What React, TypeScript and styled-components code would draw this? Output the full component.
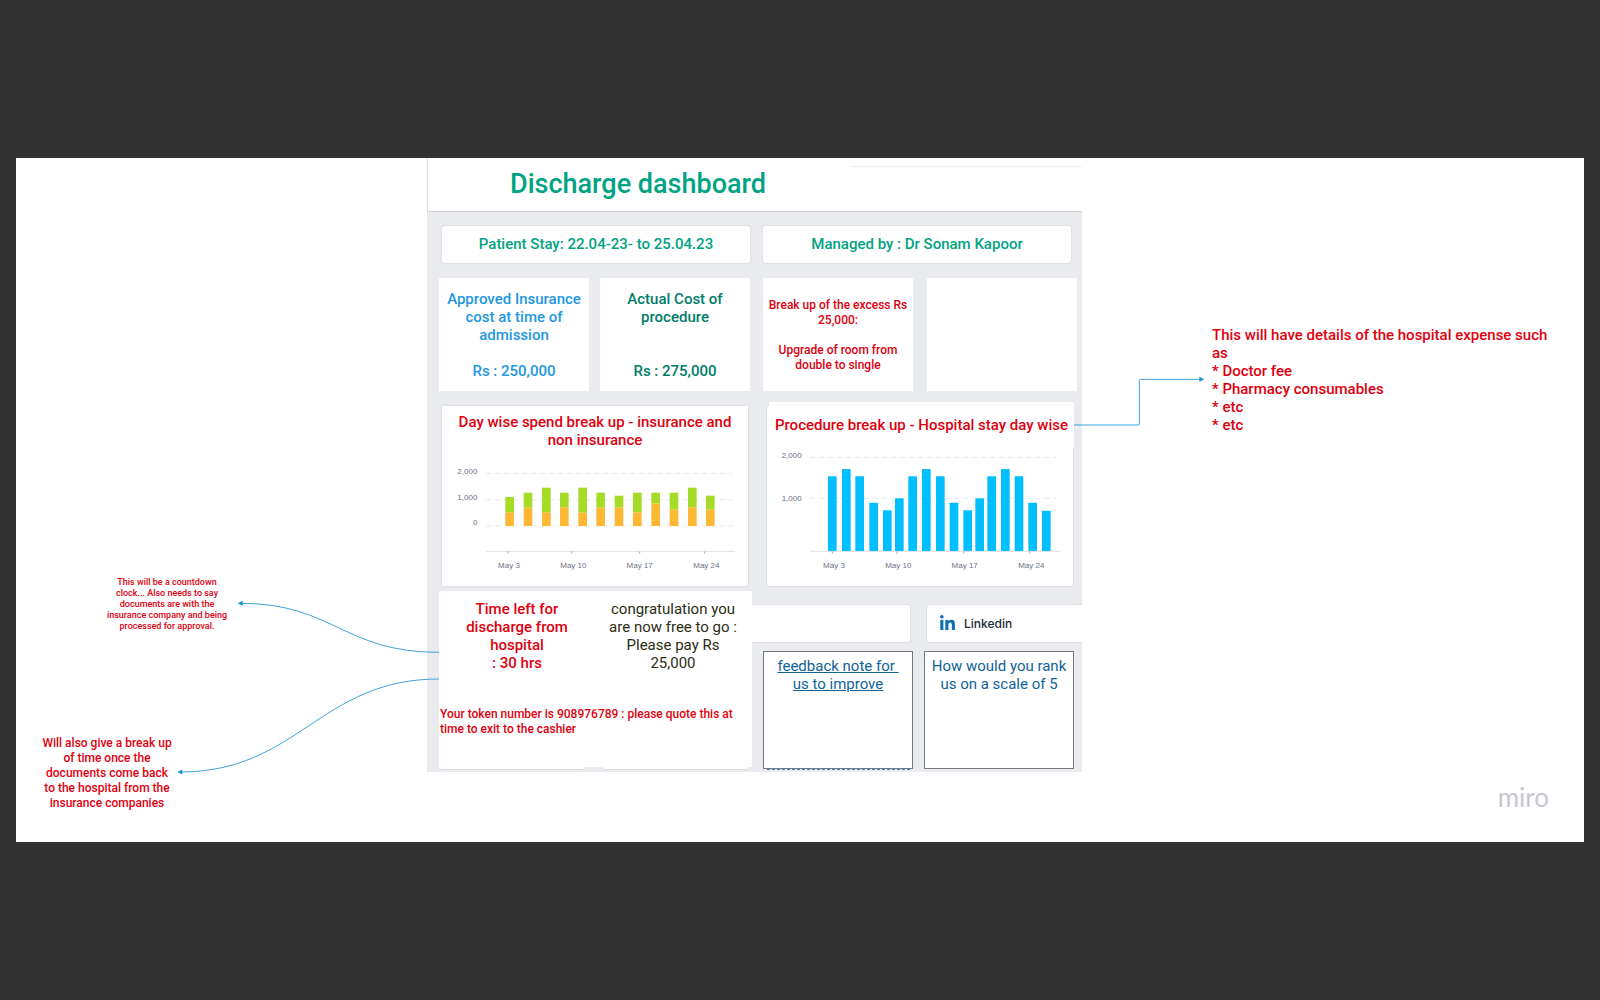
import React from "react";
import styled, { createGlobalStyle } from "styled-components";
import { FaLinkedinIn } from "react-icons/fa";

const color = {
  backdrop: "#323232",
  panel: "#eaebef",
  line: "#dcdde1",
  teal: "#00a383",
  blue: "#1e98e0",
  green: "#007d68",
  red: "#e0000f",
  olive: "#2b2d12",
  navy: "#0f6396",
  connector: "#3fa3dc",
};

const GlobalStyle = createGlobalStyle`
  *, *::before, *::after { box-sizing: border-box; }
  body {
    margin: 0;
    background: ${color.backdrop};
    font-family: Roboto, "Liberation Sans", sans-serif;
  }
  h1, h2, p { margin: 0; font-weight: 400; }
`;

const Page = styled.main`
  min-height: 100vh;
  padding: 16px;
  display: flex;
  flex-direction: column;
  justify-content: center;
`;

const Board = styled.div`
  position: relative;
  min-height: 684px;
  background: #fff;
  display: grid;
  grid-template-columns: 411fr 655fr 502fr;
  align-items: start;
`;

const Text = styled.p<{ $size?: "tiny" | "small" | "body"; $color?: string; $align?: string; $regular?: boolean }>`
  font-size: ${(p) => (p.$size === "tiny" ? 9 : p.$size === "small" ? 12 : 15)}px;
  line-height: ${(p) => (p.$size === "tiny" ? 11 : p.$size === "small" ? 15 : 18)}px;
  font-weight: ${(p) => (p.$regular ? 400 : 500)};
  color: ${(p) => p.$color ?? color.red};
  text-align: ${(p) => p.$align ?? "center"};
  white-space: pre-line;
`;

const LeftNotes = styled.aside`
  position: relative;
  padding: 419px 198px 0 20px;
  display: flex;
  flex-direction: column;
  align-items: flex-end;
  gap: 104px;
`;

const ClockNote = styled(Text)`
  width: 124px;
`;

const BreakupNote = styled(Text)`
  width: 132px;
  margin-right: 56px;
`;

const RightNotes = styled.aside`
  position: relative;
  padding: 168px 32px 0 130px;
`;

const LeftConnectors = styled.svg`
  position: absolute;
  z-index: 1;
  top: 442px;
  right: -12px;
  width: 261px;
  height: 180px;
`;

const RightConnector = styled.svg`
  position: absolute;
  z-index: 1;
  top: 214px;
  left: -8px;
  width: 132px;
  height: 60px;
`;

const Brand = styled.span`
  position: absolute;
  right: 35px;
  bottom: 31px;
  font: 400 26px/28px Lato, sans-serif;
  color: #c6c6cf;
`;

const Dashboard = styled.section`
  background: ${color.panel};
  padding-bottom: 3px;
`;

const Header = styled.header`
  position: relative;
  height: 54px;
  padding: 0 82px 2px;
  display: flex;
  align-items: center;
  background: #fff;
  border-left: 1px solid ${color.line};
  border-bottom: 1px solid #d3d3d8;
  &::after {
    content: "";
    position: absolute;
    top: 8px;
    right: 0;
    width: 232px;
    height: 1px;
    background: #f0f0f2;
  }
`;

const Title = styled.h1`
  font-size: 27px;
  line-height: 34px;
  font-weight: 500;
  color: ${color.teal};
`;

const InfoRow = styled.div`
  padding: 14px 11px 0 15px;
  display: grid;
  grid-template-columns: 1fr 1fr;
  gap: 13px;
`;

const InfoBox = styled.div`
  height: 37px;
  padding-bottom: 1px;
  display: flex;
  align-items: center;
  justify-content: center;
  background: #fff;
  border-radius: 3px;
  box-shadow: 0 0 1px 1px #e0e1e5;
`;

const TileRow = styled.div`
  padding: 15px 5px 0 12px;
  display: grid;
  grid-template-columns: 311fr 314fr;
  gap: 13px;
`;

const TilePair = styled.div<{ $gap: number }>`
  display: grid;
  grid-template-columns: 1fr 1fr;
  gap: ${(p) => p.$gap}px;
`;

const Tile = styled.div<{ $center?: boolean }>`
  height: 113px;
  padding: ${(p) => (p.$center ? 2 : 12)}px 4px 0;
  display: flex;
  flex-direction: column;
  justify-content: ${(p) => (p.$center ? "center" : "flex-start")};
  background: #fff;
`;

const ChartRow = styled.div`
  padding: 15px 9px 0 15px;
  display: grid;
  grid-template-columns: 1fr 1fr;
  gap: 19px;
`;

const ChartCard = styled.article`
  position: relative;
  height: 180px;
  display: flex;
  flex-direction: column;
  justify-content: space-between;
  background: #fff;
  border-radius: 2px;
  box-shadow: 0 0 1px 1px #dfe0e4;
`;

const ChartTitle = styled.h2<{ $raised?: boolean }>`
  position: relative;
  margin: ${(p) => (p.$raised ? "-4px -1px 0 2px" : "0")};
  padding: ${(p) => (p.$raised ? "14px 0" : "7px 10px 0")};
  background: #fff;
  font-size: 15px;
  line-height: 18px;
  font-weight: 500;
  text-align: center;
  color: ${color.red};
`;

const Plot = styled.svg`
  display: block;
  width: 100%;
  text {
    font-family: "Liberation Sans", sans-serif;
    font-size: 24px;
    fill: #6d7182;
  }
`;

const BottomRow = styled.div`
  padding: 5px 0 0 12px;
  display: grid;
  grid-template-columns: 313fr 330fr;
`;

const StatusPanel = styled.div`
  height: 176px;
  padding-left: 1px;
  background: #fff;
`;

const StatusColumns = styled.div`
  height: 116px;
  padding-top: 9px;
  display: grid;
  grid-template-columns: 1fr 1fr;
`;

const Status = styled(Text)`
  padding: 0 13px 0 11px;
`;

const Lips = styled.div`
  padding: 0 4px 0 1px;
  display: grid;
  grid-template-columns: 1fr 1fr;
  gap: 18px;
`;

const Lip = styled.span`
  height: 2px;
  background: #fff;
  border-radius: 0 0 3px 3px;
  box-shadow: 0 1px 0 #dcdde1;
`;

const ShareRow = styled.div`
  padding-top: 14px;
  display: grid;
  grid-template-columns: 158fr 155fr;
  gap: 17px;
  overflow-x: clip;
`;

const ShareBox = styled.div<{ $open: "left" | "right" }>`
  height: 37px;
  display: flex;
  align-items: center;
  padding: 0 12px;
  background: #fff;
  border-radius: ${(p) => (p.$open === "left" ? "0 3px 3px 0" : "3px 0 0 3px")};
  box-shadow: 0 0 1px 1px #dfe0e4;
`;

const ShareLink = styled.a`
  display: flex;
  align-items: center;
  gap: 8px;
  font: 500 12px/16px Inter, sans-serif;
  color: #1c2b3c;
  text-decoration: none;
  svg {
    color: #0a70b8;
  }
`;

const FeedbackRow = styled.div`
  padding: 9px 8px 0 11px;
  display: grid;
  grid-template-columns: 1fr 1fr;
  gap: 11px;
`;

const FeedbackBox = styled.div<{ $dashed?: boolean }>`
  position: relative;
  height: 118px;
  padding: 5px 4px 0;
  background: #fff;
  border: 1px solid #77797c;
  font-size: 15px;
  line-height: 18px;
  text-align: center;
  color: ${color.navy};
  &::after {
    content: "";
    position: absolute;
    left: 3px;
    right: 2px;
    bottom: -2px;
    border-bottom: ${(p) => (p.$dashed ? "1px dashed #3e86b8" : "0")};
  }
`;

const FeedbackLink = styled.a`
  display: block;
  white-space: pre-line;
  color: inherit;
`;

const BASE_LEFT = 407;
const spend = [
  [256, 320, 367], [311, 307, 352], [366, 292, 367], [420, 307, 352],
  [475, 292, 367], [529, 307, 352], [584, 316, 352], [639, 307, 366],
  [694, 307, 340], [749, 307, 358], [804, 292, 352], [858, 316, 358],
];

const BASE_RIGHT = 483;
const procedure = [
  [234, 259], [276, 237], [316, 259], [358, 338], [399, 361], [435, 325],
  [475, 259], [516, 237], [558, 259], [599, 338], [640, 361], [676, 325],
  [712, 259], [753, 237], [794, 259], [835, 338], [876, 362],
];

const days = ["May 3", "May 10", "May 17", "May 24"];

function Axis({ from, to, y, ticks, labels }: { from: number; to: number; y: number; ticks: number[]; labels: number[] }) {
  return (
    <g>
      <path d={`M${from} ${y}H${to}`} stroke="#dfe0e4" strokeWidth="3" />
      {ticks.map((x) => (
        <path key={x} d={`M${x} ${y}v8`} stroke="#b4b6bf" strokeWidth="3" />
      ))}
      {days.map((day, i) => (
        <text key={day} x={labels[i]} y="534" textAnchor="middle">{day}</text>
      ))}
    </g>
  );
}

function Grid({ from, to, rows }: { from: number; to: number; rows: number[] }) {
  return (
    <g>
      {rows.map((y) => (
        <path key={y} d={`M${from} ${y}H${to}`} stroke="#e9eaed" strokeWidth="3" strokeDasharray="16 11" />
      ))}
    </g>
  );
}

function SpendChart() {
  return (
    <Plot viewBox="66 200 918 388" role="img" aria-label="Day wise spend">
      <Grid from={198} to={937} rows={[249, 328, 407]} />
      <text x="172" y="250" textAnchor="end">2,000</text>
      <text x="172" y="330" textAnchor="end">1,000</text>
      <text x="172" y="404" textAnchor="end">0</text>
      {spend.map(([x, top, split]) => (
        <g key={x}>
          <rect x={x} y={top} width="26" height={split - top} fill="#a6dc28" />
          <rect x={x} y={split} width="26" height={BASE_LEFT - split} fill="#ffb833" />
        </g>
      ))}
      <Axis from={198} to={945} y={483} ticks={[264, 455, 659, 854]} labels={[267, 460, 659, 859]} />
    </Plot>
  );
}

function ProcedureChart() {
  return (
    <Plot viewBox="51 180 918 408" role="img" aria-label="Procedure spend">
      <Grid from={180} to={921} rows={[202, 325]} />
      <text x="155" y="204" textAnchor="end">2,000</text>
      <text x="155" y="332" textAnchor="end">1,000</text>
      <Axis from={182} to={932} y={484} ticks={[247, 441, 641, 839]} labels={[252, 445, 644, 844]} />
      {procedure.map(([x, top]) => (
        <rect key={x} x={x} y={top} width="26" height={BASE_RIGHT - top} rx="2" fill="#00bfff" />
      ))}
    </Plot>
  );
}

export default function App() {
  return (
    <>
      <GlobalStyle />
      <Page>
        <Board>
          <LeftNotes>
            <ClockNote $size="tiny">
              This will be a countdown clock... Also needs to say documents are with the insurance company and being processed for approval.
            </ClockNote>
            <BreakupNote $size="small">
              Will also give a break up of time once the documents come back to the hospital from the insurance companies
            </BreakupNote>
            <LeftConnectors viewBox="534 120 783 540" fill="none" stroke={color.connector} strokeWidth="3" aria-hidden="true">
              <path d="M1317 277C1030 277 1000 130 722 130" />
              <path d="M1317 357C960 357 895 636 540 636" />
              <path d="M715 130l12-6v12zM534 636l12-6v12z" fill="#1592d2" stroke="#1592d2" strokeWidth="2" />
            </LeftConnectors>
          </LeftNotes>

          <Dashboard>
            <Header>
              <Title>Discharge dashboard</Title>
            </Header>

            <InfoRow>
              <InfoBox><Text $color={color.teal}>Patient Stay: 22.04-23- to 25.04.23</Text></InfoBox>
              <InfoBox><Text $color={color.teal}>Managed by : Dr Sonam Kapoor</Text></InfoBox>
            </InfoRow>

            <TileRow>
              <TilePair $gap={11}>
                <Tile><Text $color={color.blue}>{"Approved Insurance cost at time of admission\n\nRs : 250,000"}</Text></Tile>
                <Tile><Text $color={color.green}>{"Actual Cost of procedure\n\n\nRs : 275,000"}</Text></Tile>
              </TilePair>
              <TilePair $gap={14}>
                <Tile $center><Text $size="small">{"Break up of the excess Rs 25,000:\n\nUpgrade of room from double to single"}</Text></Tile>
                <Tile />
              </TilePair>
            </TileRow>

            <ChartRow>
              <ChartCard>
                <ChartTitle>Day wise spend break up - insurance and non insurance</ChartTitle>
                <SpendChart />
              </ChartCard>
              <ChartCard>
                <ChartTitle $raised>Procedure break up - Hospital stay day wise</ChartTitle>
                <ProcedureChart />
              </ChartCard>
            </ChartRow>

            <BottomRow>
              <div>
                <StatusPanel>
                  <StatusColumns>
                    <Status>{"Time left for discharge from hospital\n: 30 hrs"}</Status>
                    <Status $regular $color={color.olive}>congratulation you are now free to go : Please pay Rs 25,000</Status>
                  </StatusColumns>
                  <Text $size="small" $align="left">
                    Your token number is 908976789 : please quote this at time to exit to the cashier
                  </Text>
                </StatusPanel>
                <Lips><Lip /><Lip /></Lips>
              </div>
              <div>
                <ShareRow>
                  <ShareBox $open="left" />
                  <ShareBox $open="right">
                    <ShareLink href="#linkedin"><FaLinkedinIn size={17} />Linkedin</ShareLink>
                  </ShareBox>
                </ShareRow>
                <FeedbackRow>
                  <FeedbackBox $dashed><FeedbackLink href="#feedback">{"feedback note for\u00a0\nus to improve"}</FeedbackLink></FeedbackBox>
                  <FeedbackBox>How would you rank us on a scale of 5</FeedbackBox>
                </FeedbackRow>
              </div>
            </BottomRow>
          </Dashboard>

          <RightNotes>
            <Text $align="left">
              {"This will have details of the hospital expense such as\n* Doctor fee\n* Pharmacy consumables\n* etc\n* etc"}
            </Text>
            <RightConnector viewBox="42 186 396 180" fill="none" stroke={color.connector} strokeWidth="3" aria-hidden="true">
              <path d="M42 345H235Q238 345 238 342V211Q238 208 241 208H420" />
              <path d="M431 208l-12-6v12z" fill="#1592d2" stroke="#1592d2" strokeWidth="2" />
            </RightConnector>
          </RightNotes>

          <Brand>miro</Brand>
        </Board>
      </Page>
    </>
  );
}
